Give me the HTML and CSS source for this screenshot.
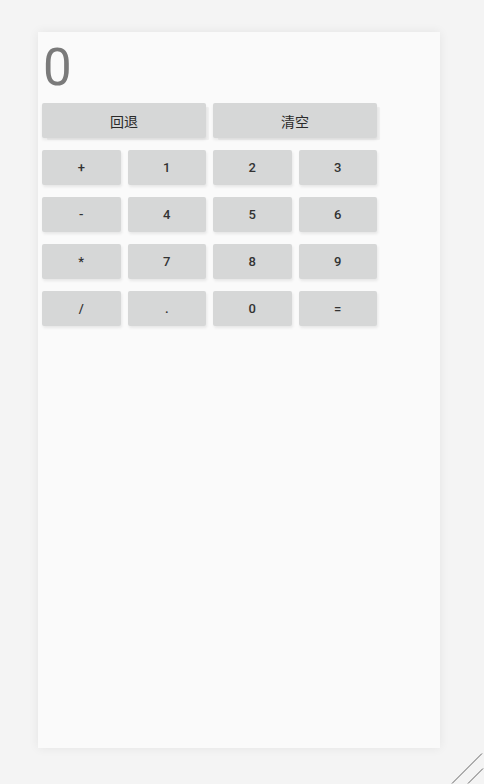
FILE: index.html
```html
<!DOCTYPE html>
<html>
<head>
<meta charset="utf-8">
<link rel="stylesheet" href="styles.css">
</head>
<body>
<div class="frame">
  <div class="display">0</div>
  <div class="keys">
    <button class="key wide">回退</button>
    <button class="key wide">清空</button>
    <button class="key">+</button>
    <button class="key">1</button>
    <button class="key">2</button>
    <button class="key">3</button>
    <button class="key">-</button>
    <button class="key">4</button>
    <button class="key">5</button>
    <button class="key">6</button>
    <button class="key">*</button>
    <button class="key">7</button>
    <button class="key">8</button>
    <button class="key">9</button>
    <button class="key">/</button>
    <button class="key">.</button>
    <button class="key">0</button>
    <button class="key">=</button>
  </div>
</div>
<svg class="grip" width="34" height="32" viewBox="0 0 34 32">
  <line x1="2" y1="31.5" x2="32" y2="1.5" stroke="#666" stroke-width="1"/>
  <line x1="18" y1="31.5" x2="33" y2="16.5" stroke="#666" stroke-width="1"/>
</svg>
</body>
</html>
```

FILE: styles.css
```css
html, body {
  margin: 0;
  padding: 0;
  background: #f4f4f4;
  height: 784px;
  overflow: hidden;
}
body {
  position: relative;
  padding-top: 32px;
  box-sizing: border-box;
  font-family: Roboto, "Noto Sans CJK SC", sans-serif;
}
.frame {
  margin-left: 38px;
  width: 402px;
  height: 716px;
  background: #fafafa;
  box-shadow: 0 0 10px rgba(0, 0, 0, 0.07);
  padding: 5px 0 0 4px;
  box-sizing: border-box;
}
.display {
  font-family: Roboto, sans-serif;
  font-size: 51px;
  line-height: 61px;
  color: #7a7a7a;
  height: 61px;
  padding-left: 1px;
}
.keys {
  margin-top: 5px;
  display: grid;
  grid-template-columns: repeat(4, 78.5px);
  grid-auto-rows: 35px;
  column-gap: 7px;
  row-gap: 12px;
}
.key {
  border: none;
  margin: 0;
  padding: 0;
  background: #d6d7d7;
  border-radius: 2px;
  font-family: Roboto, "Noto Sans CJK SC", sans-serif;
  font-size: 13px;
  font-weight: 500;
  color: #333;
  box-shadow: 1px 2px 3px rgba(0, 0, 0, 0.08);
}
.wide {
  grid-column: span 2;
  font-size: 14px;
  font-weight: 400;
  color: #2a2a2a;
  box-shadow: 4px 3px 1px -1px rgba(0, 0, 0, 0.05), 0 2px 3px rgba(0, 0, 0, 0.07);
}
.grip {
  position: absolute;
  right: 0;
  bottom: 0;
}
```
